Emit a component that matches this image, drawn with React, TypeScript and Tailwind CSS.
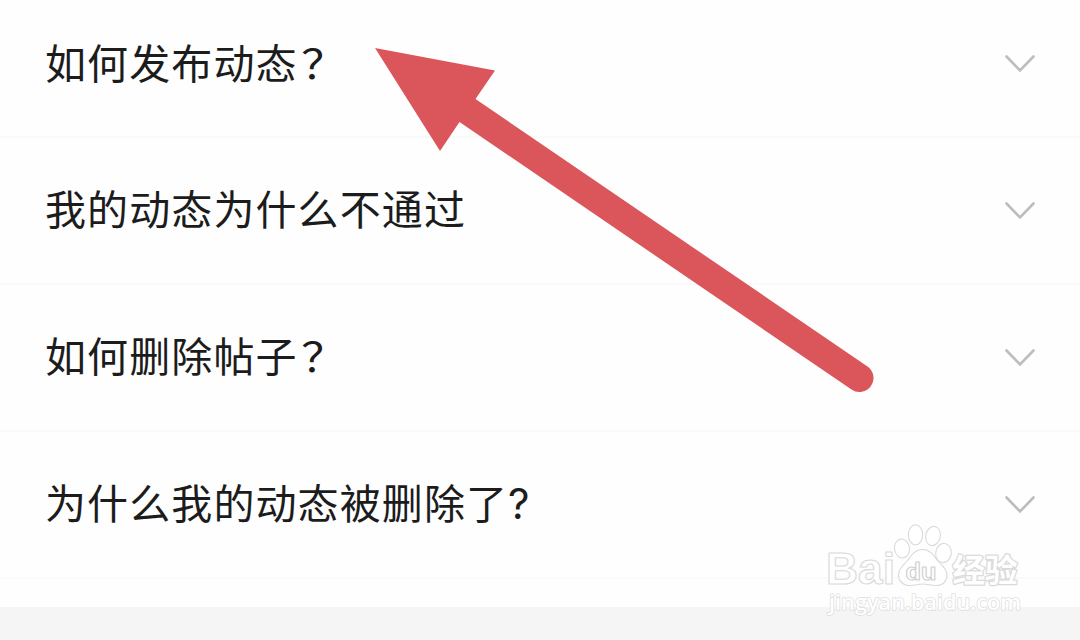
import { clsx } from 'clsx';

interface Question {
  id: number;
  title: string;
  mark?: string;
}

const questions: Question[] = [
  { id: 1, title: '如何发布动态', mark: '？' },
  { id: 2, title: '我的动态为什么不通过' },
  { id: 3, title: '如何删除帖子', mark: '？' },
  { id: 4, title: '为什么我的动态被删除了', mark: '?' },
];

function ChevronDown() {
  return (
    <svg width="32" height="20" viewBox="0 0 32 20" fill="none" className="shrink-0">
      <path d="M2.5 2.5 L16 16.5 L29.5 2.5" stroke="#bdbdbd" strokeWidth="2.6" strokeLinecap="round" />
    </svg>
  );
}

function QuestionRow({ title, mark, first }: { title: string; mark?: string; first: boolean }) {
  return (
    <button
      className={clsx(
        'flex w-full items-center justify-between border-b-2 border-[#fafafa] pl-[45px] pr-11 text-left',
        first ? 'h-[138px] pb-2' : 'h-[147px]'
      )}
    >
      <span className="pb-[7px] text-[41px] leading-[60px] tracking-[1.1px] text-[#1c1c1c]">
        {title}
        {mark === '?' && <span className="font-['Inter',sans-serif] text-[42px] leading-none">?</span>}
        {mark === '？' && <span className="inline-block origin-left scale-x-110 pl-[3px]">？</span>}
      </span>
      <ChevronDown />
    </button>
  );
}

function Arrow() {
  return (
    <svg
      width="1080"
      height="640"
      viewBox="0 0 1080 640"
      className="pointer-events-none absolute left-0 top-0"
    >
      <path
        d="M375 48 L495 70.5 L475.5 99 L867.5 366.5 A14 14 0 0 1 851.5 389.5 L459.5 122 L440 151 Z"
        fill="#db565b"
      />
    </svg>
  );
}

function Watermark() {
  return (
    <svg
      width="230"
      height="130"
      viewBox="0 0 230 130"
      className="pointer-events-none absolute left-[810px] top-[510px]"
      fill="#ffffff"
      stroke="#dadada"
      strokeWidth="1.1"
      strokeLinejoin="round"
    >
      {/* Wordmark */}
      <text
        x="16"
        y="74"
        fontFamily="'Liberation Sans', sans-serif"
        fontWeight="700"
        fontSize="44"
        textLength="69"
        lengthAdjust="spacingAndGlyphs"
      >
        Bai
      </text>

      {/* Paw */}
      <ellipse cx="92" cy="38.5" rx="7.5" ry="9.5" transform="rotate(-8 92 38.5)" />
      <ellipse cx="105.5" cy="24.8" rx="7.2" ry="10" />
      <ellipse cx="123" cy="26" rx="7.3" ry="9.7" transform="rotate(12 123 26)" />
      <ellipse cx="133.5" cy="43" rx="7.8" ry="9.6" transform="rotate(8 133.5 43)" />
      <path d="M112.5 39.5 C105 39.5 101.5 45 98 50 C94 55 88.5 58 88.5 65 C88.5 71 93 75.5 100 75.5 C105 75.5 108 74 113 74 C118 74 121 75.5 126 75.5 C133 75.5 137 71 137 65 C137 58 131 55 127 50 C123.5 45 120 39.5 112.5 39.5 Z" />
      <text
        x="95.5"
        y="70"
        fontFamily="'Liberation Sans', sans-serif"
        fontWeight="700"
        fontSize="24"
        textLength="31"
        lengthAdjust="spacingAndGlyphs"
        stroke="#cfcfcf"
      >
        du
      </text>

      <text
        x="142.5"
        y="71.5"
        fontFamily="'Noto Sans CJK SC', sans-serif"
        fontWeight="700"
        fontSize="32"
        textLength="65"
        lengthAdjust="spacingAndGlyphs"
        strokeWidth="2.6"
        paintOrder="stroke"
      >
        经验
      </text>

      <text
        x="19"
        y="100"
        fontFamily="'Open Sans', sans-serif"
        fontWeight="600"
        fontSize="22"
        textLength="192"
        lengthAdjust="spacingAndGlyphs"
        strokeWidth="1.6"
        stroke="#dedede"
        paintOrder="stroke"
      >
        jingyan.baidu.com
      </text>
    </svg>
  );
}

export default function App() {
  return (
    <main className="relative flex h-[640px] w-[1080px] flex-col overflow-hidden bg-[#fefefe] font-['Noto_Sans_CJK_SC',sans-serif]">
      <section>
        {questions.map((question, index) => (
          <QuestionRow key={question.id} title={question.title} mark={question.mark} first={index === 0} />
        ))}
      </section>
      <div className="mt-auto h-[33px] bg-[#f5f5f5]" />

      <Arrow />
      <Watermark />
    </main>
  );
}
